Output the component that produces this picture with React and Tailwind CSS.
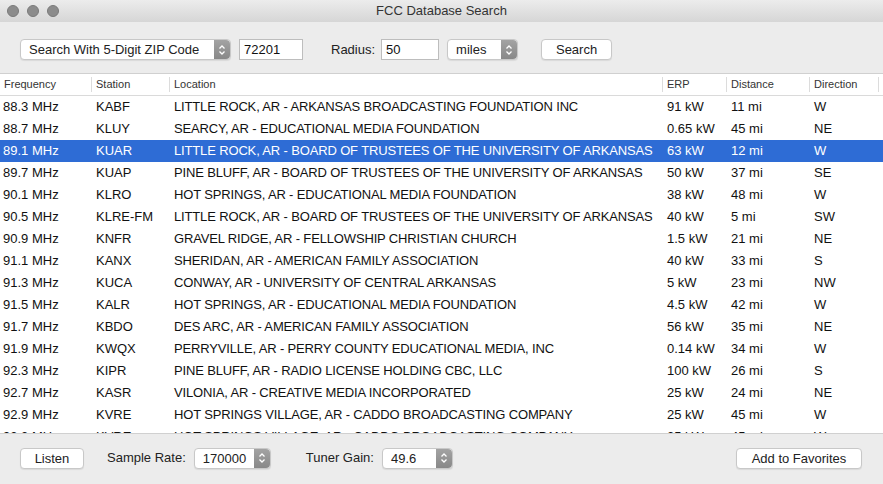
import React from "react";

const rows = [
  ["88.3 MHz", "KABF", "LITTLE ROCK, AR - ARKANSAS BROADCASTING FOUNDATION INC", "91 kW", "11 mi", "W"],
  ["88.7 MHz", "KLUY", "SEARCY, AR - EDUCATIONAL MEDIA FOUNDATION", "0.65 kW", "45 mi", "NE"],
  ["89.1 MHz", "KUAR", "LITTLE ROCK, AR - BOARD OF TRUSTEES OF THE UNIVERSITY OF ARKANSAS", "63 kW", "12 mi", "W"],
  ["89.7 MHz", "KUAP", "PINE BLUFF, AR - BOARD OF TRUSTEES OF THE UNIVERSITY OF ARKANSAS", "50 kW", "37 mi", "SE"],
  ["90.1 MHz", "KLRO", "HOT SPRINGS, AR - EDUCATIONAL MEDIA FOUNDATION", "38 kW", "48 mi", "W"],
  ["90.5 MHz", "KLRE-FM", "LITTLE ROCK, AR - BOARD OF TRUSTEES OF THE UNIVERSITY OF ARKANSAS", "40 kW", "5 mi", "SW"],
  ["90.9 MHz", "KNFR", "GRAVEL RIDGE, AR - FELLOWSHIP CHRISTIAN CHURCH", "1.5 kW", "21 mi", "NE"],
  ["91.1 MHz", "KANX", "SHERIDAN, AR - AMERICAN FAMILY ASSOCIATION", "40 kW", "33 mi", "S"],
  ["91.3 MHz", "KUCA", "CONWAY, AR - UNIVERSITY OF CENTRAL ARKANSAS", "5 kW", "23 mi", "NW"],
  ["91.5 MHz", "KALR", "HOT SPRINGS, AR - EDUCATIONAL MEDIA FOUNDATION", "4.5 kW", "42 mi", "W"],
  ["91.7 MHz", "KBDO", "DES ARC, AR - AMERICAN FAMILY ASSOCIATION", "56 kW", "35 mi", "NE"],
  ["91.9 MHz", "KWQX", "PERRYVILLE, AR - PERRY COUNTY EDUCATIONAL MEDIA, INC", "0.14 kW", "34 mi", "W"],
  ["92.3 MHz", "KIPR", "PINE BLUFF, AR - RADIO LICENSE HOLDING CBC, LLC", "100 kW", "26 mi", "S"],
  ["92.7 MHz", "KASR", "VILONIA, AR - CREATIVE MEDIA INCORPORATED", "25 kW", "24 mi", "NE"],
  ["92.9 MHz", "KVRE", "HOT SPRINGS VILLAGE, AR - CADDO BROADCASTING COMPANY", "25 kW", "45 mi", "W"],
  ["93.3 MHz", "KVRE", "HOT SPRINGS VILLAGE, AR - CADDO BROADCASTING COMPANY", "25 kW", "45 mi", "W"],
];

const cols = "grid grid-cols-[92px_78px_493px_64px_83px_69px_1fr]";

const Stepper = () => (
  <div className="w-[16px] self-stretch rounded-r-[4px] bg-gradient-to-b from-[#a3a3a3] to-[#888888] flex items-center justify-center">
    <svg width="8" height="12" viewBox="0 0 8 12" fill="none" stroke="white" strokeWidth="1.3">
      <path d="M1.5 4.5 L4 2 L6.5 4.5" />
      <path d="M1.5 7.5 L4 10 L6.5 7.5" />
    </svg>
  </div>
);

const Popup = ({ label, className }) => (
  <div className={`h-[21px] flex items-stretch bg-white rounded-[4px] border border-[#c8c8c8] shadow-[0_1px_1px_rgba(0,0,0,0.08)] ${className}`}>
    <span className="flex-1 pl-[8px] leading-[19px] text-[13px] text-[#222]">{label}</span>
    <Stepper />
  </div>
);

const Field = ({ value, className }) => (
  <div className={`h-[21px] bg-white border border-[#bdbdbd] pl-[4px] leading-[20px] text-[13px] text-[#111] ${className}`}>
    {value}
  </div>
);

const Button = ({ label, className }) => (
  <div className={`h-[21px] bg-white rounded-[4px] border border-[#c8c8c8] shadow-[0_1px_1px_rgba(0,0,0,0.08)] text-center leading-[19px] text-[13px] text-[#222] ${className}`}>
    {label}
  </div>
);

export default function App() {
  return (
    <div className="w-[883px] h-[484px] flex flex-col bg-[#ececec] overflow-hidden font-['Liberation_Sans',_Arial,_sans-serif]">
      {/* Title bar */}
      <div className="h-[22px] relative flex items-center justify-center bg-gradient-to-b from-[#ececec] to-[#d6d6d6]">
        <div className="absolute left-[7px] top-[5px] flex gap-[8px]">
          <div className="w-[12px] h-[12px] rounded-full bg-[#8c8c8c] border border-[#7a7a7a]" />
          <div className="w-[12px] h-[12px] rounded-full bg-[#8c8c8c] border border-[#7a7a7a]" />
          <div className="w-[12px] h-[12px] rounded-full bg-[#8c8c8c] border border-[#7a7a7a]" />
        </div>
        <span className="text-[13px] text-[#333]">FCC Database Search</span>
      </div>

      {/* Toolbar */}
      <div className="h-[52px] border-b border-[#d0d0d0] flex items-center pl-[20px] pt-[4px]">
        <Popup label="Search With 5-Digit ZIP Code" className="w-[211px]" />
        <Field value="72201" className="w-[64px] ml-[8px]" />
        <span className="ml-[28px] text-[13px] text-[#222]">Radius:</span>
        <Field value="50" className="w-[58px] ml-[6px]" />
        <Popup label="miles" className="w-[71px] ml-[8px]" />
        <Button label="Search" className="w-[71px] ml-[23px]" />
      </div>

      {/* Table */}
      <div className="flex-1 bg-white overflow-hidden">
        <div className={`${cols} h-[22px] border-b border-[#dadada] text-[11px] text-[#333] items-center`}>
          {["Frequency", "Station", "Location", "ERP", "Distance", "Direction"].map((h) => (
            <div key={h} className="pl-[4px] border-r border-[#dcdcdc] leading-[15px]">{h}</div>
          ))}
          <div />
        </div>
        {rows.map((r, i) => (
          <div
            key={i}
            className={`${cols} h-[22px] items-center text-[13px] ${i === 2 ? "bg-[#2e6cd5] text-white" : "text-[#111]"}`}
          >
            {r.map((c, j) => (
              <div
                key={j}
                className={`whitespace-nowrap overflow-hidden ${j === 0 ? "pl-[3px]" : "pl-[4px]"} ${j === 2 ? "tracking-[-0.15px]" : ""}`}
              >
                {c}
              </div>
            ))}
            <div />
          </div>
        ))}
      </div>

      {/* Bottom bar */}
      <div className="h-[51px] border-t border-[#d0d0d0] flex items-center pl-[20px] pr-[21px] pb-[2px]">
        <Button label="Listen" className="w-[64px]" />
        <span className="ml-[23px] text-[13px] text-[#222]">Sample Rate:</span>
        <Popup label="170000" className="w-[77px] ml-[8px]" />
        <span className="ml-[35px] text-[13px] text-[#222]">Tuner Gain:</span>
        <Popup label="49.6" className="w-[71px] ml-[8px]" />
        <Button label="Add to Favorites" className="w-[126px] ml-auto" />
      </div>
    </div>
  );
}
